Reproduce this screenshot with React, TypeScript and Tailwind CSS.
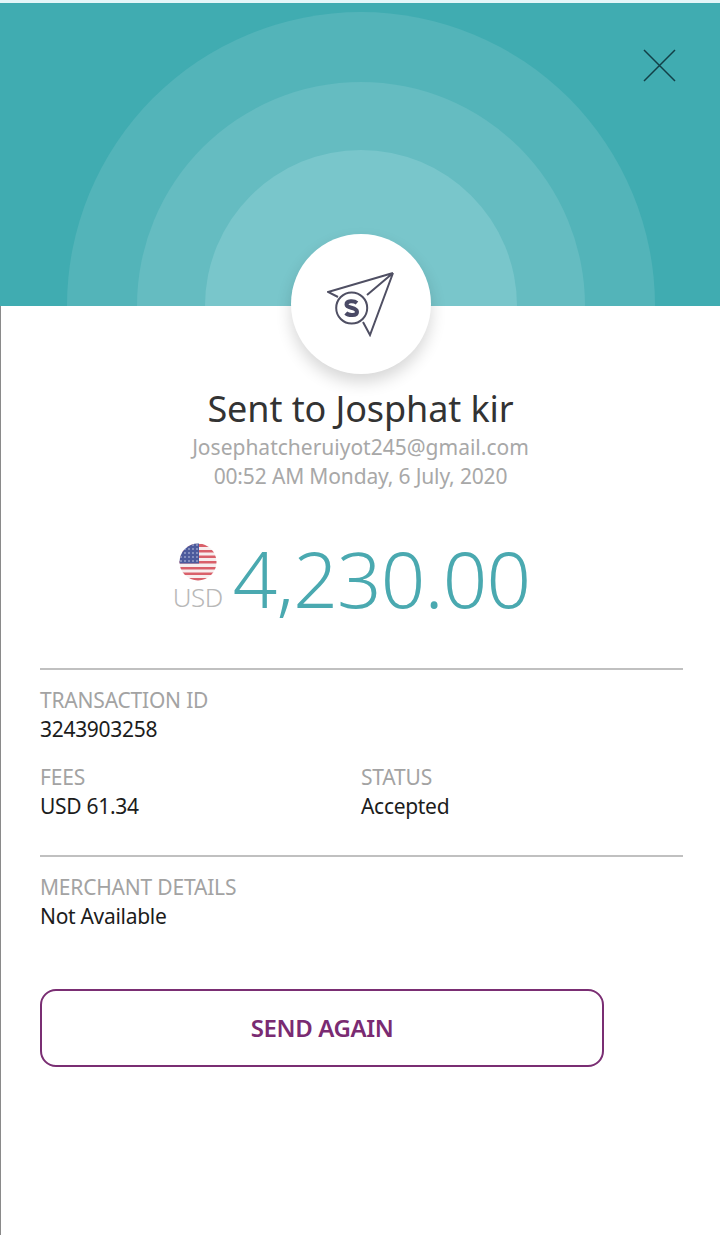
import React from "react";

const font = { fontFamily: '"Noto Sans", sans-serif' };

const Field = ({ label, value }: { label: string; value: string }) => (
  <div>
    <p className="text-[21px] leading-[29px] tracking-[-0.2px] text-[#a3a3a3]">{label}</p>
    <p className="text-[21px] leading-[29px] tracking-[-0.3px] text-[#1c1c1c]">{value}</p>
  </div>
);

const PlaneIcon = () => (
  <svg width="68" height="66" viewBox="0 0 68 66" fill="none" stroke="#4f4f63" strokeWidth="2">
    <path d="M66 2 L1 21 L11 26 M66 2 L43 64 L36 51 M66 2 L40 24" />
    <circle cx="24.700" cy="37" r="15.500" />
    <path d="M30 32 C27 29.500 19.500 29.500 19.500 33.500 C19.500 38 30 35.500 30 41 C30 45 21.500 44.800 18.800 42" strokeWidth="4" stroke="#4a4a66" />
  </svg>
);

const stars = [2, 6, 10, 14, 18].flatMap((y) => [2, 6, 10, 14, 18].map((x) => ({ x, y })));

const UsFlag = () => (
  <svg width="38" height="38" viewBox="0 0 38 38">
    <defs>
      <clipPath id="flag-clip">
        <circle cx="19" cy="19" r="18.500" />
      </clipPath>
    </defs>
    <g clipPath="url(#flag-clip)">
      <rect width="38" height="38" fill="#f7eeee" />
      <rect y="1" width="38" height="3" fill="#d9606a" />
      <rect y="7" width="38" height="2.500" fill="#d9606a" />
      <rect y="12.500" width="38" height="2.500" fill="#d9606a" />
      <rect y="18" width="38" height="2.500" fill="#d9606a" />
      <rect y="24" width="38" height="2.500" fill="#d9606a" />
      <rect y="29.500" width="38" height="2.500" fill="#d9606a" />
      <rect y="35" width="38" height="3" fill="#d9606a" />
      <rect width="20" height="20.500" fill="#4c5a9c" />
      {stars.map((s) => (
        <circle key={`${s.x}-${s.y}`} cx={s.x} cy={s.y} r="0.800" fill="#cdd2ea" />
      ))}
    </g>
  </svg>
);

export default function App() {
  return (
    <div className="h-[1235px] w-[720px] overflow-hidden bg-white" style={font}>
      <div className="h-[3px] bg-[#e4f6f8]" />
      <div className="relative h-[303px] overflow-hidden bg-[#40acb1]">
        <div className="absolute left-[67px] top-[9px] h-[588px] w-[588px] rounded-full bg-[#53b4b9]" />
        <div className="absolute left-[137px] top-[79px] h-[448px] w-[448px] rounded-full bg-[#65bcc1]" />
        <div className="absolute left-[205px] top-[147px] h-[312px] w-[312px] rounded-full bg-[#79c6cb]" />
        <svg className="absolute left-[643px] top-[46px]" width="33" height="33" viewBox="0 0 33 33" stroke="#123f47" strokeWidth="1.500">
          <path d="M1 1 L32 32 M32 1 L1 32" />
        </svg>
      </div>

      <div className="relative h-[929px] border-l border-[#8a8a8a]">
        <div className="absolute left-[290px] top-[-72px] flex h-[140px] w-[140px] items-center justify-center rounded-full bg-white shadow-[0_8px_16px_rgba(0,0,0,0.16)]">
          <PlaneIcon />
        </div>

        <div className="flex flex-col items-center pt-[80px]">
          <h1 className="text-[36px] leading-[46px] tracking-[-0.1px] text-[#333]">Sent to Josphat kir</h1>
          <p className="mt-[1px] text-[21px] leading-[29px] text-[#a8a8a8]">Josephatcheruiyot245@gmail.com</p>
          <p className="text-[21px] leading-[29px] tracking-[-0.15px] text-[#a8a8a8]">00:52 AM Monday, 6 July, 2020</p>

          <div className="mt-[35px] flex items-end gap-[10px] pr-[18px]">
            <div className="flex flex-col items-center pb-[16px]">
              <UsFlag />
              <span className="text-[26px] leading-[33px] font-light tracking-[-0.5px] text-[#b8b8b8]">USD</span>
            </div>
            <span className="text-[78px] leading-[104px] font-light tracking-[-0.8px] text-[#4aa9b0]">4,230.00</span>
          </div>
        </div>

        <div className="ml-[39px] mt-[38px] w-[643px]">
          <div className="border-t-2 border-[#c0c0c0] pt-[16px]">
            <Field label="TRANSACTION ID" value="3243903258" />
            <div className="mt-[19px] grid grid-cols-[321px_1fr] pb-[34px]">
              <Field label="FEES" value="USD 61.34" />
              <Field label="STATUS" value="Accepted" />
            </div>
          </div>
          <div className="border-t-2 border-[#c0c0c0] pt-[16px]">
            <Field label="MERCHANT DETAILS" value="Not Available" />
          </div>
          <button className="mt-[58px] flex h-[78px] w-[564px] items-center justify-center rounded-[16px] border-2 border-[#7a2e73] bg-white text-[24px] font-semibold tracking-[-0.4px] text-[#7a2b72]">
            SEND AGAIN
          </button>
        </div>
      </div>
    </div>
  );
}
